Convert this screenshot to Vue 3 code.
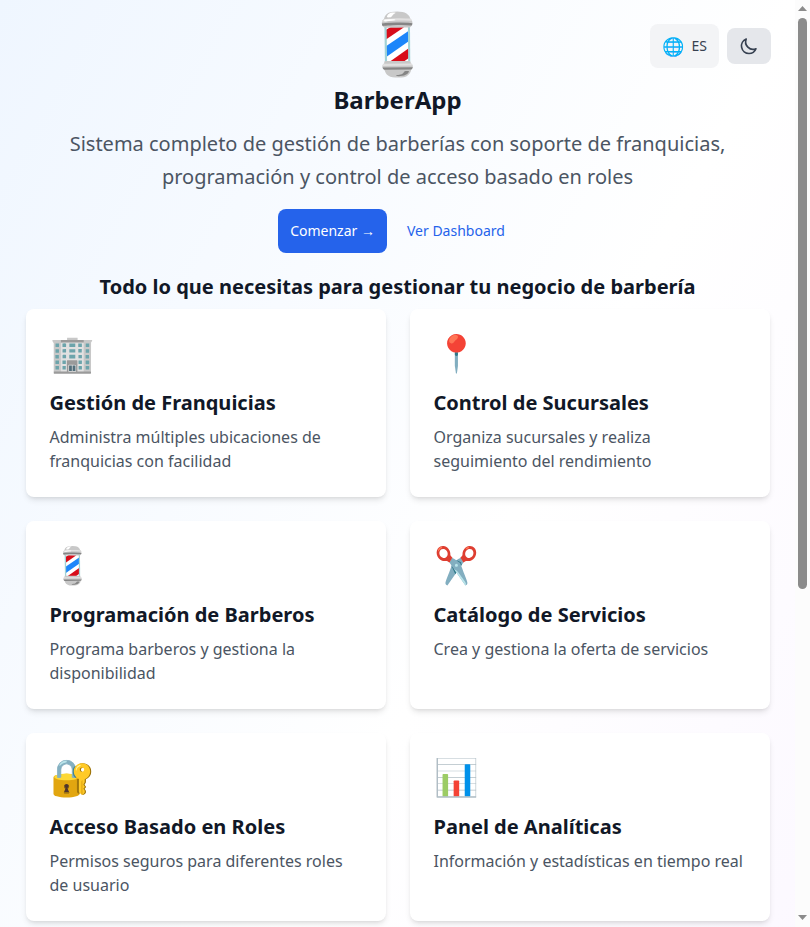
<script setup>
const features = [
  { icon: '🏢', title: 'Gestión de Franquicias', text: 'Administra múltiples ubicaciones de franquicias con facilidad' },
  { icon: '📍', title: 'Control de Sucursales', text: 'Organiza sucursales y realiza seguimiento del rendimiento' },
  { icon: '💈', title: 'Programación de Barberos', text: 'Programa barberos y gestiona la disponibilidad' },
  { icon: '✂️', title: 'Catálogo de Servicios', text: 'Crea y gestiona la oferta de servicios' },
  { icon: '🔐', title: 'Acceso Basado en Roles', text: 'Permisos seguros para diferentes roles de usuario' },
  { icon: '📊', title: 'Panel de Analíticas', text: 'Información y estadísticas en tiempo real' },
]
</script>

<template>
  <div class="viewport">
    <div class="page">
      <div class="controls">
        <button class="lang"><span class="globe">🌐</span><span>ES</span></button>
        <button class="theme" aria-label="Tema">
          <svg viewBox="0 0 24 24" width="20" height="20" fill="none" stroke="currentColor" stroke-width="2" stroke-linecap="round" stroke-linejoin="round"><path d="M20.354 15.354A9 9 0 018.646 3.646 9.003 9.003 0 0012 21a9.003 9.003 0 008.354-5.646z" /></svg>
        </button>
      </div>
      <main class="content">
        <div class="logo">💈</div>
        <h1>BarberApp</h1>
        <p class="lead">Sistema completo de gestión de barberías con soporte de franquicias, programación y control de acceso basado en roles</p>
        <div class="actions">
          <a class="primary">Comenzar →</a>
          <a class="secondary">Ver Dashboard</a>
        </div>
        <h2>Todo lo que necesitas para gestionar tu negocio de barbería</h2>
        <section class="grid">
          <article v-for="f in features" :key="f.title" class="card">
            <div class="icon">{{ f.icon }}</div>
            <h3>{{ f.title }}</h3>
            <p>{{ f.text }}</p>
          </article>
        </section>
      </main>
    </div>
    <div class="scrollbar">
      <svg width="15" height="15" viewBox="0 0 15 15"><path d="M3 11L7.500 6L12 11z" fill="#8b8b8b" /></svg>
      <div class="track"><div class="thumb"></div></div>
      <svg width="15" height="15" viewBox="0 0 15 15"><path d="M3 3L7.500 8L12 3z" fill="#8b8b8b" /></svg>
    </div>
  </div>
</template>

<style>
body { margin: 0; overflow: hidden; }
</style>

<style scoped>
.viewport { display: flex; height: 927px; overflow: hidden; font-family: "Noto Sans", "Noto Color Emoji", sans-serif; color: #111827; }
.page { position: relative; width: 795px; height: 1456px; flex: none; background: linear-gradient(to bottom right, #eff6ff, #ffffff, #faf5ff); }
.controls { position: absolute; top: 24px; right: 24px; display: flex; align-items: center; gap: 8px; }
button { border: 0; margin: 0; font-family: inherit; color: #374151; display: flex; align-items: center; box-sizing: border-box; border-radius: 8px; }
.lang { width: 69px; height: 44px; padding: 0 12px; gap: 7px; background: #f3f4f6; font-size: 14px; line-height: 20px; }
.globe { font-size: 18px; line-height: 28px; }
.theme { width: 44px; height: 36px; padding: 0; justify-content: center; background: #e5e7eb; }
.content { width: 744px; margin: 0 auto; padding-top: 12px; text-align: center; }
.logo { font-size: 60px; line-height: 60px; }
h1 { margin: 12px 0 0; font-size: 24px; line-height: 32px; font-weight: 700; }
.lead { width: 672px; margin: 12px auto 0; font-size: 20px; line-height: 32.5px; color: #4b5563; }
.actions { display: flex; justify-content: center; gap: 8px; margin-top: 16px; font-size: 14px; line-height: 20px; }
.actions a { padding: 12px; border-radius: 8px; }
.primary { background: #2563eb; color: #fff; }
.secondary { color: #2563eb; }
h2 { margin: 20px 0 8px; font-size: 20.03px; line-height: 28px; font-weight: 700; }
.grid { display: grid; grid-template-columns: 1fr 1fr; gap: 24px; text-align: left; }
.card { box-sizing: border-box; height: 188px; padding: 24px; background: #fff; border-radius: 8px; box-shadow: 0 4px 6px -1px rgba(0,0,0,.1), 0 2px 4px -2px rgba(0,0,0,.1); }
.icon { height: 40px; margin-bottom: 16px; padding-left: 1px; font-size: 36px; line-height: 40px; }
h3 { margin: 0 0 8px; font-size: 20.03px; line-height: 28px; font-weight: 700; }
.card p { margin: 0; font-size: 16px; line-height: 24px; color: #4b5563; }
.scrollbar { width: 15px; flex: none; display: flex; flex-direction: column; background: #fcfcfc; }
.scrollbar svg { display: block; flex: none; }
.track { flex: 1; padding: 3px 3px 0; }
.thumb { width: 9px; height: 571px; border-radius: 5px; background: #8b8b8b; }
</style>
